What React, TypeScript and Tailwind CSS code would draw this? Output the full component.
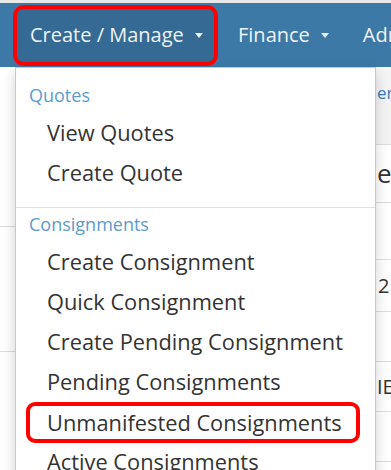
import React from "react";

const font = { fontFamily: '"Open Sans", "Liberation Sans", sans-serif' };

function Caret() {
  return (
    <span className="ml-[11px] inline-block h-0 w-0 border-x-[4px] border-t-[5px] border-x-transparent border-t-[#e9f0f6] align-middle" />
  );
}

export default function App() {
  const quotes = ["View Quotes", "Create Quote"];
  const consignments = [
    "Create Consignment",
    "Quick Consignment",
    "Create Pending Consignment",
    "Pending Consignments",
    "Unmanifested Consignments",
    "Active Consignments",
  ];

  return (
    <div className="w-[391px] h-[470px] overflow-hidden bg-white" style={font}>
      {/* top strip */}
      <div className="h-[3px] bg-[#e6e8ea]" />

      {/* navbar */}
      <div className="h-[64px] bg-[#3c79a7] flex items-center text-[20px] text-[#eef3f7] whitespace-nowrap overflow-hidden">
        <div className="shrink-0 ml-[13px] h-[61px] w-[205px] rounded-[11px] border-4 border-[#ff0000] bg-[#346a93] flex items-center pl-[13px]">
          Create / Manage
          <Caret />
        </div>
        <div className="shrink-0 ml-[20px] flex items-center">
          Finance
          <Caret />
        </div>
        <div className="shrink-0 ml-[34px]">Admin</div>
      </div>

      {/* page behind the dropdown */}
      <div className="relative flex h-[403px]">
        <div className="w-[15px] flex flex-col">
          <div className="h-[160px] border-b border-[#dcdcdc]" />
          <div className="h-[125px] border-b border-[#dcdcdc]" />
        </div>
        <div className="flex-1" />
        <div className="w-[15px] flex flex-col text-[#333] overflow-hidden whitespace-nowrap">
          <div className="h-[78px] bg-[#f4f4f4] border-b border-[#dcdcdc] pt-[13px] pl-[1px] text-[17px] leading-[26px] text-[#3b7bb5]">
            er
          </div>
          <div className="h-[58px] border-b border-[#dcdcdc] flex items-center pl-[1px] text-[26px]">
            e
          </div>
          <div className="h-[57px] border-b border-[#dcdcdc]" />
          <div className="h-[52px] border-b border-[#dcdcdc] flex items-center pl-[2px] text-[20px]">
            2
          </div>
          <div className="h-[50px] border-b border-[#dcdcdc]" />
          <div className="h-[50px] border-b border-[#dcdcdc] flex items-center pl-[1px] text-[20px]">
            IE
          </div>
          <div className="h-[50px] border-b border-[#dcdcdc]" />
        </div>

        {/* dropdown menu */}
        <div className="absolute left-[15px] top-0 w-[361px] h-[420px] bg-white border border-[#c8c8c8] shadow-[0_6px_12px_rgba(0,0,0,0.18)] pt-[12px] whitespace-nowrap">
          <div className="h-[30px] leading-[30px] mb-[3px] pl-[13px] text-[18px] text-[#5d9bcc]">
            Quotes
          </div>
          {quotes.map((q) => (
            <div key={q} className="h-[40px] leading-[40px] pl-[31px] text-[21.8px] text-[#333]">
              {q}
            </div>
          ))}
          <div className="mt-[14px] h-px bg-[#e2e2e2]" />
          <div className="mt-[1px] h-[30px] leading-[30px] mb-[3px] pl-[13px] text-[18px] text-[#5d9bcc]">
            Consignments
          </div>
          {consignments.map((c) =>
            c === "Unmanifested Consignments" ? (
              <div key={c} className="h-[40px] pl-[10px]">
                <div className="h-[41px] w-[334px] rounded-[9px] border-4 border-[#ff0000] pl-[17px] text-[21.8px] leading-[33px] text-[#333]">
                  {c}
                </div>
              </div>
            ) : (
              <div key={c} className="h-[40px] leading-[40px] pl-[31px] text-[21.8px] text-[#333]">
                {c}
              </div>
            )
          )}
        </div>
      </div>
    </div>
  );
}
